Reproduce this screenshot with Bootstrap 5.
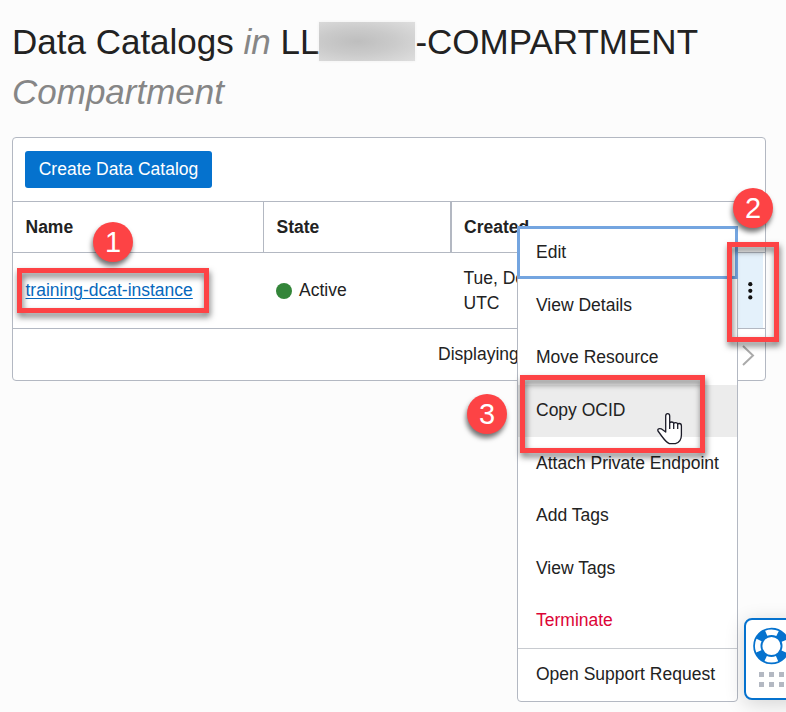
<!DOCTYPE html>
<html lang="en">
<head>
<meta charset="utf-8">
<title>Data Catalogs</title>
<link rel="stylesheet" href="https://cdn.jsdelivr.net/npm/bootstrap@5.3.0/dist/css/bootstrap.min.css">
<style>
body{width:786px;height:712px;overflow:hidden;background:#fcfcfc;color:#222;font-family:"Liberation Sans",Arial,sans-serif;font-size:17.5px;line-height:25px}
.page-title{font-size:35px;line-height:50px;padding:17px 0 0 12px;margin:0 0 20px}
.page-title em{color:#868686}
.redacted{display:inline-block;width:96px;height:39px;vertical-align:-7px;background:radial-gradient(ellipse at 40% 50%,#bebebe 0,#cacaca 45%,#dedede 100%);box-shadow:0 0 3px #eee}
.catalog-panel{width:754px;height:244px;margin-left:12px;border:1px solid #b3b8c2;border-radius:4px;background:#fff}
.toolbar{height:63px;padding:13px 12px}
.btn-create{background:#0572ce;color:#fff;width:187px;height:37px;border-radius:3px;font-size:17.5px;line-height:25px;padding:5px 0}
.head-row{height:51px;border-top:1px solid #b3b8c2;font-weight:700}
.data-row{height:76px;border-top:1px solid #b3b8c2}
.foot-row{height:52px;border-top:1px solid #b3b8c2;padding-left:425px}
.c-name{width:250px;padding-left:12.5px;flex:none}
.c-state{width:187px;padding-left:13px;flex:none}
.c-created{padding-left:13.5px;flex:1}
.head-row .c-state{border-left:1px solid #b3b8c2;padding-left:12.5px}
.head-row .c-created{border-left:2px solid #b3b8c2;padding-left:12px}
.c-name a{color:#0668bc;text-underline-offset:1.5px;text-decoration-thickness:1px}
.state-dot{width:16px;height:16px;background:#338539;margin-right:7px}
.c-actions{width:26px;background:#e4f1fb;margin-right:2px}
.action-menu{left:517px;top:226px;width:221px;height:476px;background:#fff;border:1px solid #b3b8c2;border-radius:4px}
.action-menu a{display:flex;align-items:center;height:52.6px;padding:0 0 1px 18px;color:#222;text-decoration:none;white-space:nowrap}
.action-menu a.focused{height:50.6px;margin-bottom:2px;outline:3px solid #74a5e0;outline-offset:-2px;padding-bottom:0}
.action-menu a.hovered{background:#ececec;padding-bottom:2px}
.action-menu a.danger{color:#dc0436;padding-bottom:2px}
.action-menu a.support{border-top:1px solid #c8cbd0;padding-bottom:0}
.callout{border:5px solid #fd4345;filter:drop-shadow(1px 4px 3px rgba(0,0,0,.55))}
.step{width:40px;height:40px;border-radius:50%;background:#fd4345;color:#fff;font-size:29px;line-height:41px;text-align:center;box-shadow:-1px 4px 5px rgba(0,0,0,.55)}
.box1{left:17px;top:268px;width:192px;height:45px}
.box2{left:727px;top:242px;width:52px;height:100px}
.box3{left:520px;top:375px;width:185px;height:78px}
.step1{left:93px;top:222px}.step2{left:733px;top:188px}.step3{left:467px;top:394px}
.pointer{left:656px;top:412px}
.help{left:744px;top:618px;width:60px;height:82px;border:2px solid #0572ce;border-radius:8px;background:#fff;box-shadow:0 4px 20px rgba(0,0,0,.16)}
</style>
<script src="https://cdn.jsdelivr.net/npm/bootstrap@5.3.0/dist/js/bootstrap.bundle.min.js"></script>
</head>
<body class="position-relative">
<h1 class="page-title fw-normal text-nowrap">Data Catalogs <em>in</em> LL<span class="redacted"></span>-COMPARTMENT<br><em>Compartment</em></h1>
<main class="catalog-panel">
  <div class="toolbar"><button class="btn btn-create border-0 d-block">Create Data Catalog</button></div>
  <div class="head-row d-flex align-items-stretch">
    <div class="c-name d-flex align-items-center">Name</div>
    <div class="c-state d-flex align-items-center">State</div>
    <div class="c-created d-flex align-items-center">Created</div>
  </div>
  <div class="data-row d-flex align-items-stretch">
    <div class="c-name d-flex align-items-center"><a href="#">training-dcat-instance</a></div>
    <div class="c-state d-flex align-items-center"><span class="state-dot rounded-circle"></span>Active</div>
    <div class="c-created d-flex align-items-center"><span>Tue, Dec<br>UTC</span></div>
    <div class="c-actions d-flex align-items-center">
      <svg width="26" height="22" viewBox="0 0 26 22"><g fill="#111"><circle cx="13.300" cy="4.200" r="2.1"/><circle cx="13.300" cy="10.800" r="2.1"/><circle cx="13.300" cy="17.400" r="2.1"/></g></svg>
    </div>
  </div>
  <div class="foot-row d-flex align-items-center justify-content-between">
    <span>Displaying</span>
    <svg width="16" height="22" viewBox="0 0 16 22" class="me-2"><path d="M2 2l10 9.500-10 9.500" fill="none" stroke="#aaa" stroke-width="2"/></svg>
  </div>
</main>
<nav class="action-menu position-absolute">
  <a href="#" class="focused">Edit</a>
  <a href="#">View Details</a>
  <a href="#">Move Resource</a>
  <a href="#" class="hovered">Copy OCID</a>
  <a href="#">Attach Private Endpoint</a>
  <a href="#">Add Tags</a>
  <a href="#">View Tags</a>
  <a href="#" class="danger">Terminate</a>
  <a href="#" class="support">Open Support Request</a>
</nav>
<div class="help position-absolute">
  <svg width="58" height="78" viewBox="0 0 58 78">
    <circle cx="25.5" cy="26" r="13.7" fill="none" stroke="#0572ce" stroke-width="9.200"/>
    <circle cx="25.5" cy="26" r="13.8" fill="none" stroke="#fff" stroke-width="5.6" stroke-dasharray="11.700 9.977" stroke-dashoffset="5.85"/>
    <g fill="#b3b8c2"><path d="M13 52h5v5h-5zM23 52h5v5h-5zM33 52h5v5h-5zM13 62h5v5h-5zM23 62h5v5h-5zM33 62h5v5h-5z"/></g>
  </svg>
</div>
<div class="callout box1 position-absolute"></div>
<div class="callout box2 position-absolute"></div>
<div class="callout box3 position-absolute"></div>
<div class="step step1 position-absolute">1</div>
<div class="step step2 position-absolute">2</div>
<div class="step step3 position-absolute">3</div>
<svg class="pointer position-absolute" width="28" height="34" viewBox="0 0 28 34"><path d="M9.7 20V4q0-2.3 2-2.3t2 2.3v7q.4-1 2-1 1.800 0 2 1.500.5-.8 2-.8 1.700 0 2 1.500.4-.7 1.700-.7 2 0 2 2.500v9q0 7-6 8.700h-6Q10 30 6 24.500L2 19q-.7-1.600.7-2.200 2-.6 4.300 1.200zM13.700 10v7M17.700 11v6M21.700 12v5" fill="#fff" stroke="#1c1c28" stroke-width="1.300" stroke-linejoin="round"/></svg>
</body>
</html>
